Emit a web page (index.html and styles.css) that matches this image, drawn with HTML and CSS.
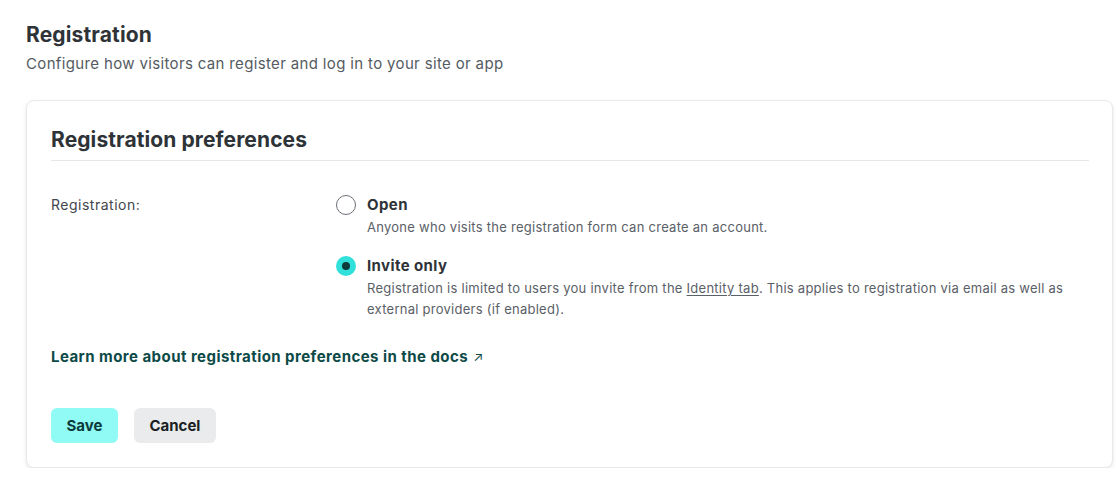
FILE: index.html
```html
<!DOCTYPE html>
<html lang="en">
<head>
<meta charset="utf-8">
<title>Registration</title>
<link rel="stylesheet" href="styles.css">
</head>
<body>
<main class="page">
  <header class="page-header">
    <h1 class="page-title">Registration</h1>
    <p class="page-subtitle">Configure how visitors can register and log in to your site or app</p>
  </header>
  <section class="card">
    <h2 class="card-title">Registration preferences</h2>
    <div class="field">
      <div class="field-label">Registration:</div>
      <div class="options">
        <label class="option">
          <span class="radio"></span>
          <span class="option-body">
            <span class="option-title">Open</span>
            <span class="option-desc">Anyone who visits the registration form can create an account.</span>
          </span>
        </label>
        <label class="option">
          <span class="radio radio-checked"></span>
          <span class="option-body">
            <span class="option-title">Invite only</span>
            <span class="option-desc">Registration is limited to users you invite from the <a class="inline-link" href="#">Identity tab</a>. This applies to registration via email as well as external providers (if enabled).</span>
          </span>
        </label>
      </div>
    </div>
    <a class="docs-link" href="#">Learn more about registration preferences in the docs <span class="arrow">↗</span></a>
    <div class="actions">
      <button class="btn btn-primary" type="button">Save</button>
      <button class="btn btn-secondary" type="button">Cancel</button>
    </div>
  </section>
</main>
</body>
</html>
```
FILE: styles.css
```css
* { box-sizing: border-box; }
html, body { margin: 0; padding: 0; background: #ffffff; }
body {
  font-family: Inter, Roboto, sans-serif;
  color: #2d3135;
}
.page { padding: 19px 3px 0 26px; }
.page-header { margin-bottom: 23px; }
.page-title {
  margin: 0;
  font-size: 21px;
  line-height: 32px;
  font-weight: 700;
  letter-spacing: 0.15px;
  color: #2e3338;
}
.page-subtitle {
  margin: 0;
  font-size: 15px;
  line-height: 26px;
  letter-spacing: 0.35px;
  color: #555b62;
}
.card {
  background: #fff;
  border: 1px solid #e8e9eb;
  border-radius: 8px;
  box-shadow: 0 2px 4px rgba(0,0,0,0.09);
  padding: 23px 23px 24px 24px;
}
.card-title {
  margin: 0;
  font-size: 21px;
  line-height: 32px;
  font-weight: 700;
  letter-spacing: 0.1px;
  color: #2e3338;
  padding-bottom: 4px;
  border-bottom: 1px solid #e6e7e9;
}
.field {
  display: flex;
  padding-top: 32px;
}
.field-label {
  width: 285px;
  font-size: 14px;
  line-height: 24px;
  letter-spacing: 0.5px;
  color: #42474d;
}
.options { flex: 1; display: flex; flex-direction: column; gap: 16px; }
.option { display: flex; gap: 11px; align-items: flex-start; }
.radio {
  flex: none;
  width: 20px; height: 20px;
  margin-top: 2px;
  border: 1px solid #6b7077;
  border-radius: 50%;
  background: #fff;
  position: relative;
}
.radio-checked {
  border: none;
  background: #31e0da;
}
.radio-checked::after {
  content: "";
  position: absolute;
  left: 6px; top: 6px;
  width: 8px; height: 8px;
  border-radius: 50%;
  background: #0c3b3c;
}
.option-body { display: flex; flex-direction: column; }
.option-title {
  font-size: 15px;
  line-height: 24px;
  font-weight: 700;
  letter-spacing: 0.4px;
  color: #2e3338;
}
.option-desc {
  font-size: 13px;
  line-height: 21px;
  letter-spacing: 0.26px;
  color: #5a6067;
}
.inline-link { color: #5a6067; text-decoration: underline; text-underline-offset: 2px; }
.docs-link {
  display: inline-block;
  margin-top: 25px;
  font-size: 15px;
  line-height: 24px;
  font-weight: 700;
  letter-spacing: 0.45px;
  color: #0d4a47;
  text-decoration: none;
}
.arrow { font-weight: 400; font-size: 13px; margin-left: 1px; }
.actions { display: flex; gap: 16px; margin-top: 39px; }
.btn {
  font-family: inherit;
  font-size: 15px;
  font-weight: 700;
  height: 35px;
  border: none;
  border-radius: 6px;
  padding: 0 15.5px;
  cursor: pointer;
}
.btn-primary { background: #8ffbf4; color: #0c3b3c; }
.btn-secondary { background: #e9ebed; color: #1b1f23; }
```
